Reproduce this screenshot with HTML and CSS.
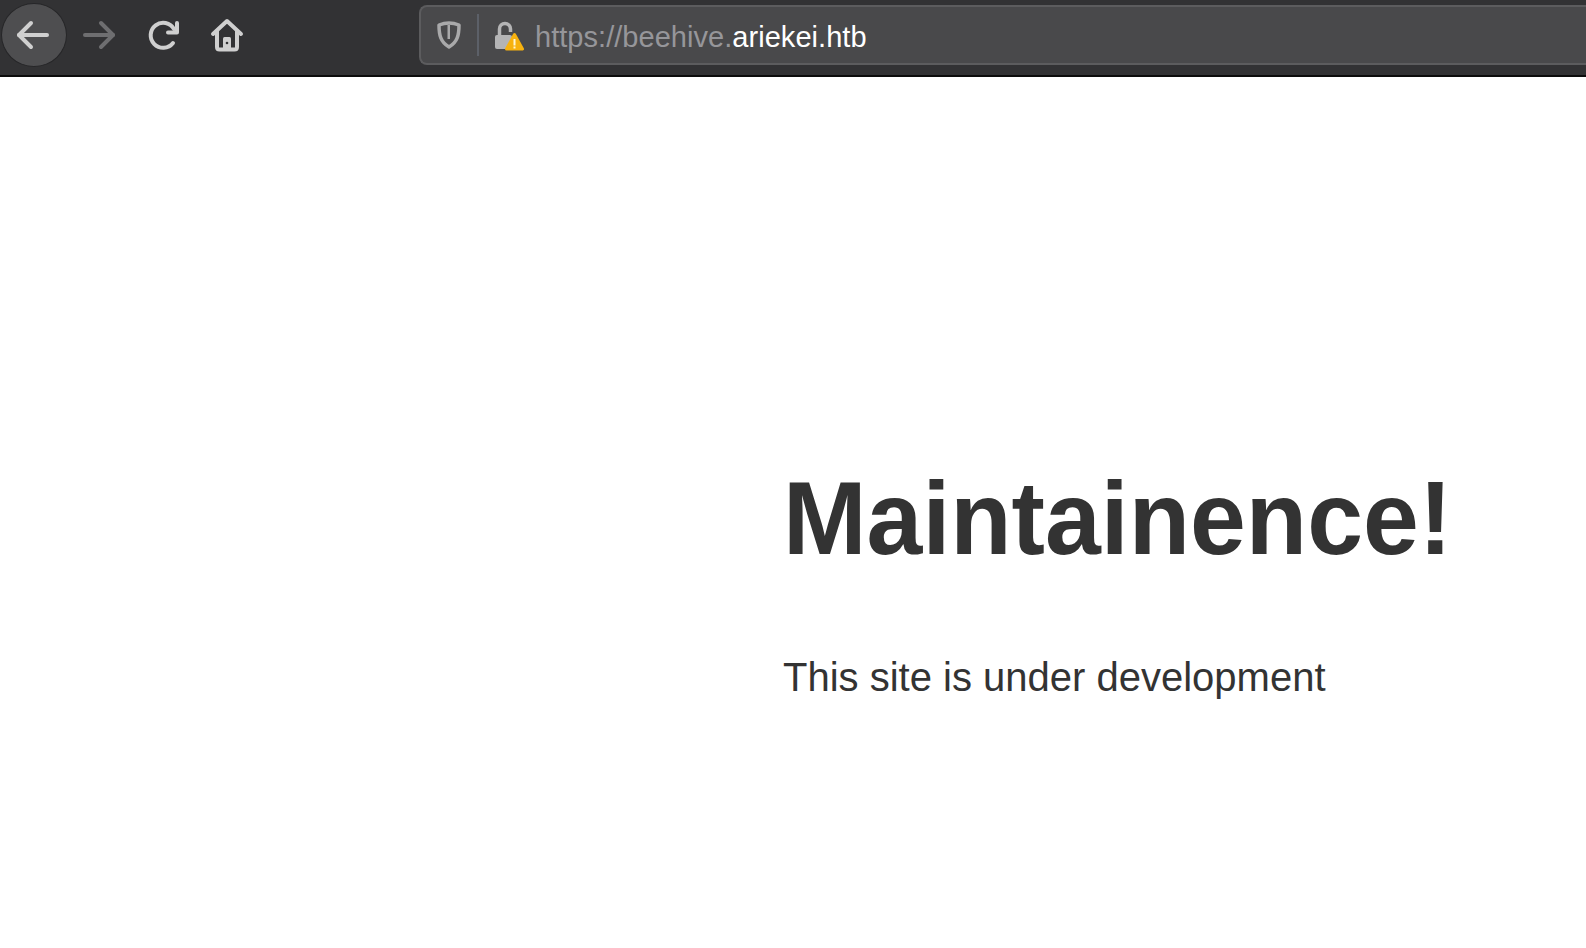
FILE: index.html
```html
<!DOCTYPE html>
<html lang="en">
<head>
    <meta charset="UTF-8">
    <meta name="viewport" content="width=device-width, initial-scale=1.0">
    <title>Maintainence</title>
    <link rel="stylesheet" href="styles.css">
</head>
<body>
    <div class="toolbar">
        <div class="nav-buttons">
            <div class="nav-btn back">
                <svg width="36" height="36" viewBox="0 0 36 36" fill="none" stroke="#d0d0d0" stroke-width="4" stroke-linecap="round" stroke-linejoin="round"><path d="M3 18H31"/><path d="M15 6L3 18L15 30"/></svg>
            </div>
            <div class="nav-btn">
                <svg width="36" height="36" viewBox="0 0 36 36" fill="none" stroke="#6e6e70" stroke-width="4" stroke-linecap="round" stroke-linejoin="round"><path d="M4 18H32"/><path d="M20 6L32 18L20 30"/></svg>
            </div>
            <div class="nav-btn">
                <svg width="36" height="36" viewBox="0 0 36 36" fill="none" stroke="#cfcfcf" stroke-width="4" stroke-linecap="round" stroke-linejoin="round"><path d="M28 26A12.500 12.500 0 1 1 29 12"/><path d="M32 6V15.500H23"/></svg>
            </div>
            <div class="nav-btn">
                <svg width="36" height="36" viewBox="0 0 36 36"><g fill="none" stroke="#cfcfcf" stroke-width="4" stroke-linecap="round" stroke-linejoin="round"><path d="M4 17L18 4L32 17"/><path d="M8 14V30C8 31.500 9 32.500 10.500 32.500H25.500C27 32.500 28 31.500 28 30V14"/></g><rect x="14" y="20" width="8" height="13" rx="1.500" fill="#cfcfcf"/><circle cx="18" cy="26" r="1.300" fill="#323234"/></svg>
            </div>
        </div>
        <div class="urlbar">
            <svg class="shield" width="24" height="28" viewBox="0 0 24 28"><path d="M12 2C8.500 2 5 2.800 2 4C2 14 3.500 21 12 26C20.500 21 22 14 22 4C19 2.800 15.500 2 12 2Z" fill="none" stroke="#a9a9aa" stroke-width="3.500" stroke-linejoin="round"/><path d="M10.500 4V18H13V4Z" fill="#a9a9aa"/></svg>
            <span class="divider"></span>
            <svg class="lock" width="29" height="30" viewBox="0 0 29 30"><path d="M4.500 14V8A5.500 5.500 0 0 1 15.500 8V11" fill="none" stroke="#b4b4b5" stroke-width="3.500"/><rect x="0" y="14" width="17" height="14" rx="2" fill="#b4b4b5"/><path d="M19.500 13.500L27.500 28H11.500Z" fill="#f7b20f" stroke="#f7b20f" stroke-width="3" stroke-linejoin="round"/><rect x="18.500" y="18" width="2" height="6.500" fill="#fff6d6"/><rect x="18.500" y="25.500" width="2" height="2" fill="#fff6d6"/></svg>
            <span class="url"><span class="url-dim">https://beehive.</span>ariekei.htb</span>
        </div>
    </div>

    <div class="page">
        <h1>Maintainence!</h1>
        <p>This site is under development</p>
    </div>
</body>
</html>
```

FILE: styles.css
```css
html, body {
    margin: 0;
    height: 100%;
}
body {
    font-family: "Liberation Sans", Arial, sans-serif;
    background-color: #fff;
    color: #333;
    overflow: hidden;
}
.toolbar {
    display: flex;
    align-items: flex-start;
    height: 75px;
    padding-left: 1px;
    background-color: #323234;
    border-bottom: 2px solid #0c0c0c;
}
.nav-buttons {
    display: flex;
    align-items: center;
    height: 70px;
    width: 418px;
    flex-shrink: 0;
}
.nav-btn {
    display: flex;
    align-items: center;
    justify-content: center;
    width: 64px;
    height: 64px;
    flex-shrink: 0;
}
.nav-btn svg {
    display: block;
}
.back {
    width: 66px;
    height: 64px;
    background-color: #4e4e50;
    border: 1px solid #262628;
    border-radius: 50%;
    box-sizing: border-box;
}
.urlbar {
    display: flex;
    align-items: center;
    flex: 1;
    height: 60px;
    margin-top: 5px;
    padding-left: 16px;
    box-sizing: border-box;
    background-color: #49494b;
    border: 2px solid #5c5c5e;
    border-right: none;
    border-radius: 8px 0 0 8px;
    color: #fff;
    font-size: 29px;
}
.divider {
    width: 2px;
    height: 42px;
    margin: 0 16px;
    background-color: #5c6068;
}
.lock {
    margin-top: 2px;
}
.url {
    margin-left: 11px;
    padding-top: 4px;
    letter-spacing: .04px;
}
.url-dim {
    color: #96969a;
}
.page {
    padding: 0 0 0 783px;
}
h1 {
    margin: 381px 0 0;
    font-size: 104px;
    line-height: 120px;
    font-weight: bold;
    transform: scaleX(.965);
    transform-origin: left;
}
p {
    margin: 74px 0 0;
    font-size: 40px;
    line-height: 50px;
}
```
